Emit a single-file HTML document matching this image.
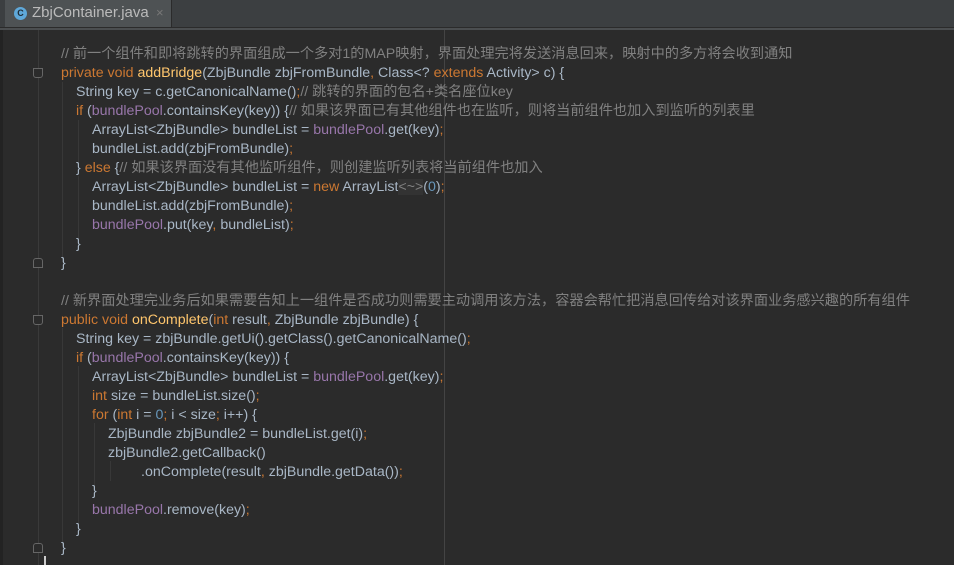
<!DOCTYPE html>
<html><head><meta charset="utf-8"><style>
html,body{margin:0;padding:0;width:954px;height:565px;overflow:hidden;background:#2b2b2b;}
body{font-family:"Liberation Sans","Noto Sans CJK SC",sans-serif;font-size:14.2px;color:#a9b7c6;position:relative;}
.tabbar{position:absolute;left:0;top:0;width:954px;height:27px;background:#3c3f41;border-bottom:1px solid #2b2b2b;}
.strip{position:absolute;left:0;top:28px;width:954px;height:2px;background:#4b4e50;}
.tab{position:absolute;left:5px;top:0;width:166px;height:27px;background:#4e5254;border-right:1px solid #2b2b2b;}
.tab .ic{position:absolute;left:9px;top:7px;width:13px;height:13px;border-radius:50%;background:#5fa8d9;color:#1e2b35;font-size:9px;font-weight:bold;text-align:center;line-height:13px;}
.tab .t{position:absolute;left:27px;top:4px;font-size:15px;color:#bbbbbb;}
.tab .x{position:absolute;left:151px;top:5px;font-size:13px;color:#777;}
.left{position:absolute;left:0;top:30px;width:3px;height:535px;background:#232323;}
.gl{position:absolute;left:38px;top:30px;width:1px;height:535px;background:#3a3a3a;}
.rm{position:absolute;left:444px;top:30px;width:1px;height:535px;background:#444;}
.l{position:absolute;white-space:pre;height:19px;line-height:19px;}
.k{color:#cc7832}.m{color:#ffc66d}.f{color:#9876aa}.c{color:#808080}.n{color:#6897bb}
.g{position:absolute;width:1px;background:#383838;}
.fold{position:absolute;left:33px;width:8px;height:8px;border:1px solid #666;border-radius:0 0 3px 3px;background:#2b2b2b;}
</style></head><body>
<div class="tabbar"><div class="tab"><div class="ic">C</div><div class="t">ZbjContainer.java</div><div class="x">×</div></div></div>
<div class="strip"></div>
<div class="left"></div><div class="gl"></div><div class="rm"></div>
<div class="g" style="left:62px;top:82px;height:180px"></div>
<div class="g" style="left:78px;top:120px;height:44px"></div>
<div class="g" style="left:78px;top:176px;height:70px"></div>
<div class="g" style="left:62px;top:328px;height:218px"></div>
<div class="g" style="left:78px;top:366px;height:160px"></div>
<div class="g" style="left:94px;top:423px;height:64px"></div>
<div class="g" style="left:110px;top:461px;height:20px"></div>
<div class="fold" style="top:68px"></div>
<div class="fold" style="top:258px;border-radius:3px 3px 0 0"></div>
<div class="fold" style="top:315px"></div>
<div class="fold" style="top:543px;border-radius:3px 3px 0 0"></div>
<div style="position:absolute;left:44px;top:556px;width:2px;height:9px;background:#ccc"></div>

<div class="l c" style="left:61px;top:45px">// 前一个组件和即将跳转的界面组成一个多对1的MAP映射，界面处理完将发送消息回来，映射中的多方将会收到通知</div>
<div class="l" style="left:61px;top:64px"><span class="k">private void </span><span class="m">addBridge</span>(ZbjBundle zbjFromBundle<span class="k">, </span>Class&lt;? <span class="k">extends </span>Activity&gt; c) {</div>
<div class="l" style="left:76px;top:83px">String key = c.getCanonicalName()<span class="k">;</span><span class="c">// 跳转的界面的包名+类名座位key</span></div>
<div class="l" style="left:76px;top:102px"><span class="k">if </span>(<span class="f">bundlePool</span>.containsKey(key)) {<span class="c">// 如果该界面已有其他组件也在监听，则将当前组件也加入到监听的列表里</span></div>
<div class="l" style="left:92px;top:121px">ArrayList&lt;ZbjBundle&gt; bundleList = <span class="f">bundlePool</span>.get(key)<span class="k">;</span></div>
<div class="l" style="left:92px;top:140px">bundleList.add(zbjFromBundle)<span class="k">;</span></div>
<div class="l" style="left:76px;top:159px">} <span class="k">else </span>{<span class="c">// 如果该界面没有其他监听组件，则创建监听列表将当前组件也加入</span></div>
<div class="l" style="left:92px;top:178px">ArrayList&lt;ZbjBundle&gt; bundleList = <span class="k">new </span>ArrayList<span style="color:#808080;background:#333">&lt;~&gt;</span>(<span class="n">0</span>)<span class="k">;</span></div>
<div class="l" style="left:92px;top:197px">bundleList.add(zbjFromBundle)<span class="k">;</span></div>
<div class="l" style="left:92px;top:216px"><span class="f">bundlePool</span>.put(key<span class="k">, </span>bundleList)<span class="k">;</span></div>
<div class="l" style="left:76px;top:235px">}</div>
<div class="l" style="left:61px;top:254px">}</div>

<div class="l c" style="left:61px;top:292px">// 新界面处理完业务后如果需要告知上一组件是否成功则需要主动调用该方法，容器会帮忙把消息回传给对该界面业务感兴趣的所有组件</div>
<div class="l" style="left:61px;top:311px"><span class="k">public void </span><span class="m">onComplete</span>(<span class="k">int </span>result<span class="k">, </span>ZbjBundle zbjBundle) {</div>
<div class="l" style="left:76px;top:330px">String key = zbjBundle.getUi().getClass().getCanonicalName()<span class="k">;</span></div>
<div class="l" style="left:76px;top:349px"><span class="k">if </span>(<span class="f">bundlePool</span>.containsKey(key)) {</div>
<div class="l" style="left:92px;top:368px">ArrayList&lt;ZbjBundle&gt; bundleList = <span class="f">bundlePool</span>.get(key)<span class="k">;</span></div>
<div class="l" style="left:92px;top:387px"><span class="k">int </span>size = bundleList.size()<span class="k">;</span></div>
<div class="l" style="left:92px;top:406px"><span class="k">for </span>(<span class="k">int </span>i = <span class="n">0</span><span class="k">; </span>i &lt; size<span class="k">; </span>i++) {</div>
<div class="l" style="left:108px;top:425px">ZbjBundle zbjBundle2 = bundleList.get(i)<span class="k">;</span></div>
<div class="l" style="left:108px;top:444px">zbjBundle2.getCallback()</div>
<div class="l" style="left:141px;top:463px">.onComplete(result<span class="k">, </span>zbjBundle.getData())<span class="k">;</span></div>
<div class="l" style="left:92px;top:482px">}</div>
<div class="l" style="left:92px;top:501px"><span class="f">bundlePool</span>.remove(key)<span class="k">;</span></div>
<div class="l" style="left:76px;top:520px">}</div>
<div class="l" style="left:61px;top:539px">}</div>
</body></html>
